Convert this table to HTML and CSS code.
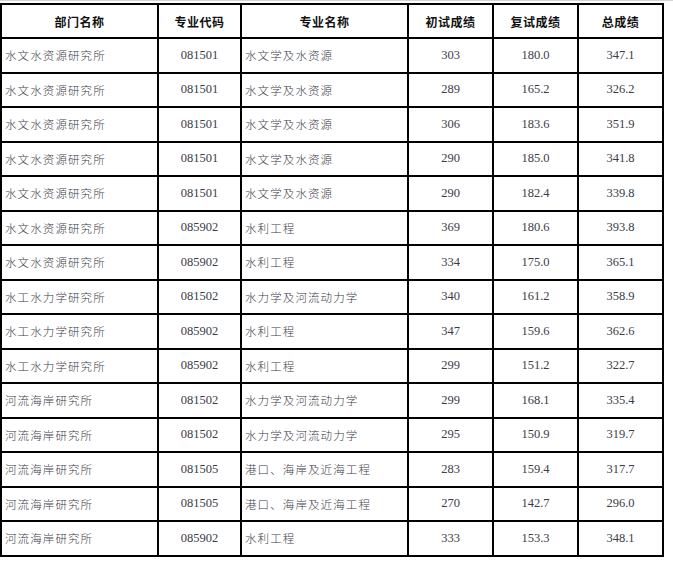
FILE: index.html
```html
<!DOCTYPE html>
<html lang="zh">
<head>
<meta charset="utf-8">
<link rel="stylesheet" href="styles.css">
</head>
<body>
<div class="page">
<table class="scores">
<colgroup>
<col class="c-dept"><col class="c-code"><col class="c-major"><col class="c-num"><col class="c-num"><col class="c-num">
</colgroup>
<thead>
<tr><th>部门名称</th><th>专业代码</th><th>专业名称</th><th>初试成绩</th><th>复试成绩</th><th>总成绩</th></tr>
</thead>
<tbody>
<tr><td class="l">水文水资源研究所</td><td>081501</td><td class="l">水文学及水资源</td><td>303</td><td>180.0</td><td>347.1</td></tr>
<tr><td class="l">水文水资源研究所</td><td>081501</td><td class="l">水文学及水资源</td><td>289</td><td>165.2</td><td>326.2</td></tr>
<tr><td class="l">水文水资源研究所</td><td>081501</td><td class="l">水文学及水资源</td><td>306</td><td>183.6</td><td>351.9</td></tr>
<tr><td class="l">水文水资源研究所</td><td>081501</td><td class="l">水文学及水资源</td><td>290</td><td>185.0</td><td>341.8</td></tr>
<tr><td class="l">水文水资源研究所</td><td>081501</td><td class="l">水文学及水资源</td><td>290</td><td>182.4</td><td>339.8</td></tr>
<tr><td class="l">水文水资源研究所</td><td>085902</td><td class="l">水利工程</td><td>369</td><td>180.6</td><td>393.8</td></tr>
<tr><td class="l">水文水资源研究所</td><td>085902</td><td class="l">水利工程</td><td>334</td><td>175.0</td><td>365.1</td></tr>
<tr><td class="l">水工水力学研究所</td><td>081502</td><td class="l">水力学及河流动力学</td><td>340</td><td>161.2</td><td>358.9</td></tr>
<tr><td class="l">水工水力学研究所</td><td>085902</td><td class="l">水利工程</td><td>347</td><td>159.6</td><td>362.6</td></tr>
<tr><td class="l">水工水力学研究所</td><td>085902</td><td class="l">水利工程</td><td>299</td><td>151.2</td><td>322.7</td></tr>
<tr><td class="l">河流海岸研究所</td><td>081502</td><td class="l">水力学及河流动力学</td><td>299</td><td>168.1</td><td>335.4</td></tr>
<tr><td class="l">河流海岸研究所</td><td>081502</td><td class="l">水力学及河流动力学</td><td>295</td><td>150.9</td><td>319.7</td></tr>
<tr><td class="l">河流海岸研究所</td><td>081505</td><td class="l">港口、海岸及近海工程</td><td>283</td><td>159.4</td><td>317.7</td></tr>
<tr><td class="l">河流海岸研究所</td><td>081505</td><td class="l">港口、海岸及近海工程</td><td>270</td><td>142.7</td><td>296.0</td></tr>
<tr><td class="l">河流海岸研究所</td><td>085902</td><td class="l">水利工程</td><td>333</td><td>153.3</td><td>348.1</td></tr>
</tbody>
</table>
</div>
</body>
</html>
```

FILE: styles.css
```css
html, body {
  margin: 0;
  padding: 0;
  background: #ffffff;
}

.page {
  border-top: 1px solid #d4d4d4;
  padding-top: 2px;
  width: 673px;
}

.scores {
  border-collapse: collapse;
  table-layout: fixed;
  width: 662px;
  font-family: "Liberation Serif", "Noto Sans CJK SC", serif;
  color: #3c3c48;
}

.c-dept { width: 157px; }
.c-code { width: 83px; }
.c-major { width: 167px; }
.c-num { width: 85px; }

.scores th,
.scores td {
  border: 2px solid #000;
  height: 32.5px;
  padding: 0;
  text-align: center;
  vertical-align: middle;
  white-space: nowrap;
}

.scores th {
  font-family: "Noto Sans CJK SC", sans-serif;
  font-weight: 700;
  font-size: 12px;
  color: #111;
  letter-spacing: 0.5px;
  height: 32px;
}

.scores td {
  font-size: 12.5px;
}

.scores td.l {
  text-align: left;
  padding-left: 3px;
  font-family: "Noto Sans CJK SC", sans-serif;
  font-weight: 300;
  font-size: 11.5px;
  letter-spacing: 1.1px;
}
```
